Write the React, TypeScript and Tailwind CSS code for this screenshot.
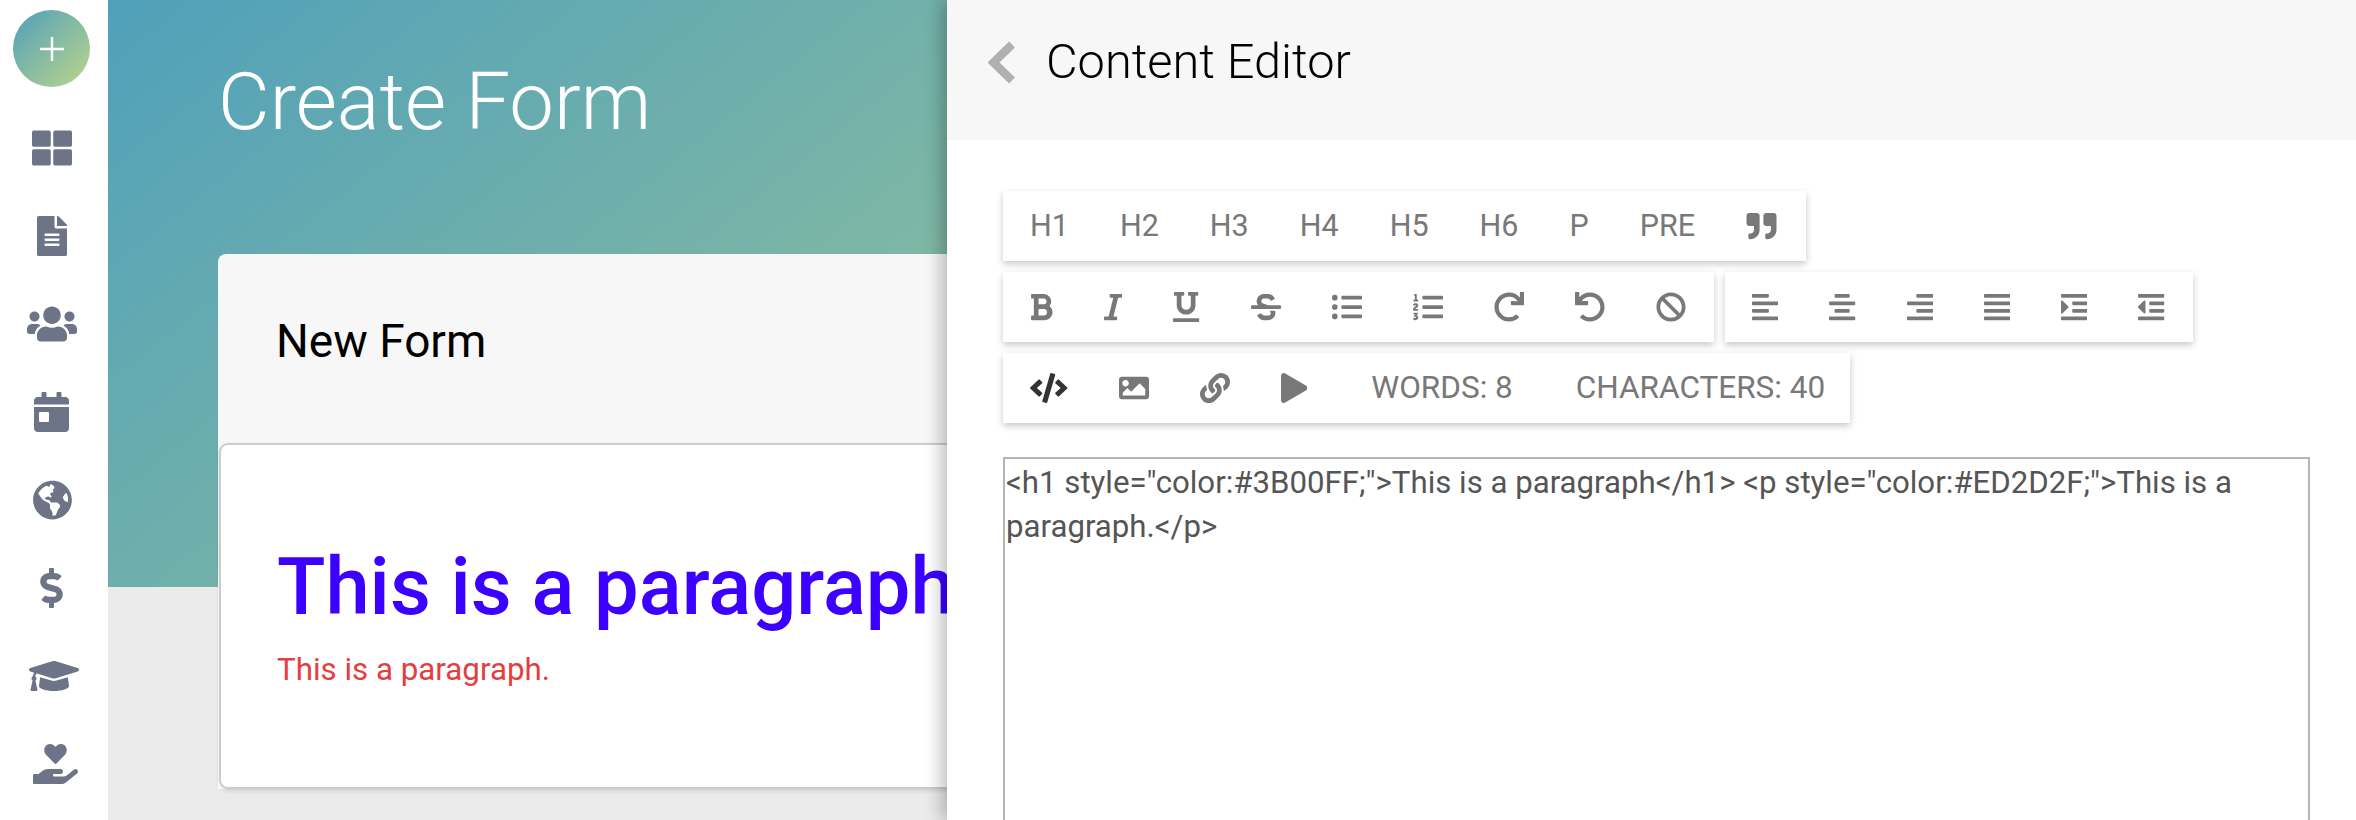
import React from "react";
import {
  FaThLarge, FaFileAlt, FaUsers, FaCalendarDay, FaGlobeAmericas, FaDollarSign, FaGraduationCap, FaHandHoldingHeart,
  FaQuoteRight, FaBold, FaItalic, FaUnderline, FaStrikethrough, FaListUl, FaListOl, FaRedo, FaUndo, FaBan,
  FaAlignLeft, FaAlignCenter, FaAlignRight, FaAlignJustify, FaIndent, FaOutdent, FaCode, FaImage, FaLink, FaPlay,
} from "react-icons/fa";

type IconType = React.ComponentType<{ className?: string }>;

const navIcons: { Icon: IconType; cls: string }[] = [
  { Icon: FaThLarge, cls: "h-[40px] w-[40px]" },
  { Icon: FaFileAlt, cls: "h-[40px] w-[30px] ml-[1px]" },
  { Icon: FaUsers, cls: "h-[40px] w-[50px]" },
  { Icon: FaCalendarDay, cls: "h-[40px] w-[35px]" },
  { Icon: FaGlobeAmericas, cls: "h-[40px] w-[39px] ml-[2px]" },
  { Icon: FaDollarSign, cls: "h-[40px] w-[23px]" },
  { Icon: FaGraduationCap, cls: "h-[40px] w-[50px] ml-[4px]" },
  { Icon: FaHandHoldingHeart, cls: "h-[40px] w-[45px] ml-[8px]" },
];
const headingButtons = ["H1", "H2", "H3", "H4", "H5", "H6", "P", "PRE"];
const formatIcons: { Icon: IconType; cls: string }[] = [
  { Icon: FaBold, cls: "h-[30px] w-[22.5px]" },
  { Icon: FaItalic, cls: "h-[30px] w-[18.75px]" },
  { Icon: FaUnderline, cls: "h-[30px] w-[26.25px]" },
  { Icon: FaStrikethrough, cls: "h-[30px] w-[30px]" },
  { Icon: FaListUl, cls: "h-[30px] w-[30px]" },
  { Icon: FaListOl, cls: "h-[30px] w-[30px]" },
  { Icon: FaRedo, cls: "h-[30px] w-[30px]" },
  { Icon: FaUndo, cls: "h-[30px] w-[30px]" },
  { Icon: FaBan, cls: "h-[30px] w-[30px]" },
];
const alignIcons: IconType[] = [FaAlignLeft, FaAlignCenter, FaAlignRight, FaAlignJustify, FaIndent, FaOutdent];
const insertIcons: { Icon: IconType; cls: string }[] = [
  { Icon: FaImage, cls: "h-[30px] w-[30px]" },
  { Icon: FaLink, cls: "h-[30px] w-[30px]" },
  { Icon: FaPlay, cls: "h-[30px] w-[26.25px]" },
];

function Toolbar({ children }: { children: React.ReactNode }) {
  return (
    <div className="flex h-[70px] items-center bg-white pl-[1.5px] pr-[3px] text-[#787878] shadow-[0_3px_7px_rgba(0,0,0,0.22)]">
      {children}
    </div>
  );
}

function IconButton({ Icon, cls, dark }: { Icon: IconType; cls: string; dark?: boolean }) {
  return (
    <div className={dark ? "flex h-full items-center px-[25.5px] text-[#333333]" : "flex h-full items-center px-[25.5px]"}>
      <Icon className={cls} />
    </div>
  );
}

export default function App() {
  return (
    <div className="flex h-[820px] w-[2356px] overflow-hidden bg-white font-['Roboto',sans-serif]">
      <aside className="flex w-[108px] shrink-0 flex-col pl-[13px] pt-[10px]">
        <div className="mb-[17px] flex h-[77px] w-[77px] items-center justify-center rounded-full bg-[linear-gradient(135deg,#4f9fbb_0%,#bdd68a_100%)]">
          <svg width="26" height="26" viewBox="0 0 26 26" className="text-white">
            <path d="M13 1v24M1 13h24" stroke="currentColor" strokeWidth="2.4" fill="none" />
          </svg>
        </div>
        {navIcons.map(({ Icon, cls }, i) => (
          <div key={i} className="flex h-[88px] w-[77px] items-center justify-center text-[#6e7488]">
            <Icon className={cls} />
          </div>
        ))}
      </aside>

      <main className="relative min-w-0 flex-1 overflow-hidden bg-[#ebebeb]">
        <div className="h-[587px] bg-[linear-gradient(141deg,#50a0ba_0%,#b8d48a_85%)] pl-[110px]">
          <h1 className="flex h-[204px] items-start pt-[54px] text-[79.5px] leading-[95px] font-light text-white">Create Form</h1>
          <div className="ml-0 mt-[50px] w-[2000px] rounded-tl-[8px] bg-[linear-gradient(#f7f7f7_60%,#ffffff_60%)]">
            <div className="flex h-[189px] items-center pb-[15px] pl-[58px] text-[46px] leading-none text-black">New Form</div>
            <div className="ml-[1px] h-[346px] rounded-[9px] border-2 border-[#cccccc] bg-white pl-[56px] pt-[94px] shadow-[0_2px_4px_rgba(0,0,0,0.12)]">
              <div className="text-[79.5px] leading-[95px] font-medium text-[#3B00FF]">This is a paragraph</div>
              <div className="mt-[16px] text-[31.3px] leading-[40px] text-[#e53e3e]">This is a paragraph.</div>
            </div>
          </div>
        </div>

        <section className="absolute inset-y-0 left-[839px] right-0 bg-white shadow-[-6px_0_16px_rgba(0,0,0,0.25)]">
          <header className="flex h-[140px] items-center bg-[#f7f7f7] pb-[16px] pl-[41px]">
            <svg width="27" height="43" viewBox="0 0 27 43" className="text-[#b0b0b0]">
              <path d="M24 3.5 5.5 21.5 24 39.5" stroke="currentColor" strokeWidth="8.5" fill="none" />
            </svg>
            <span className="ml-[31px] text-[48.7px] leading-none font-light text-black">Content Editor</span>
          </header>
          <div className="pl-[56px] pr-[46px] pt-[51px]">
            <div className="flex flex-col items-start gap-[11px]">
              <Toolbar>
                {headingButtons.map((t) => (
                  <div key={t} className="px-[25.5px] text-[30.5px] leading-none">{t}</div>
                ))}
                <IconButton Icon={FaQuoteRight} cls="h-[30px] w-[31px]" />
              </Toolbar>
              <div className="flex gap-[11px]">
                <Toolbar>{formatIcons.map(({ Icon, cls }, i) => <IconButton key={i} Icon={Icon} cls={cls} />)}</Toolbar>
                <Toolbar>{alignIcons.map((Icon, i) => <IconButton key={i} Icon={Icon} cls="h-[30px] w-[26.25px]" />)}</Toolbar>
              </div>
              <Toolbar>
                <IconButton Icon={FaCode} cls="h-[30px] w-[37.5px]" dark />
                {insertIcons.map(({ Icon, cls }, i) => <IconButton key={i} Icon={Icon} cls={cls} />)}
                <div className="ml-[39px] text-[31.5px] leading-none">WORDS: 8</div>
                <div className="ml-[63px] mr-[22px] text-[31.5px] leading-none">CHARACTERS: 40</div>
              </Toolbar>
            </div>
            <div className="mt-[34px] h-[500px] border-2 border-[#b5b5b5] pl-[1px] pt-[2px] text-[31.2px] leading-[44px] text-[#555555]">
              {'<h1 style="color:#3B00FF;">This is a paragraph</h1> <p style="color:#ED2D2F;">This is a paragraph.</p>'}
            </div>
          </div>
        </section>
      </main>
    </div>
  );
}
